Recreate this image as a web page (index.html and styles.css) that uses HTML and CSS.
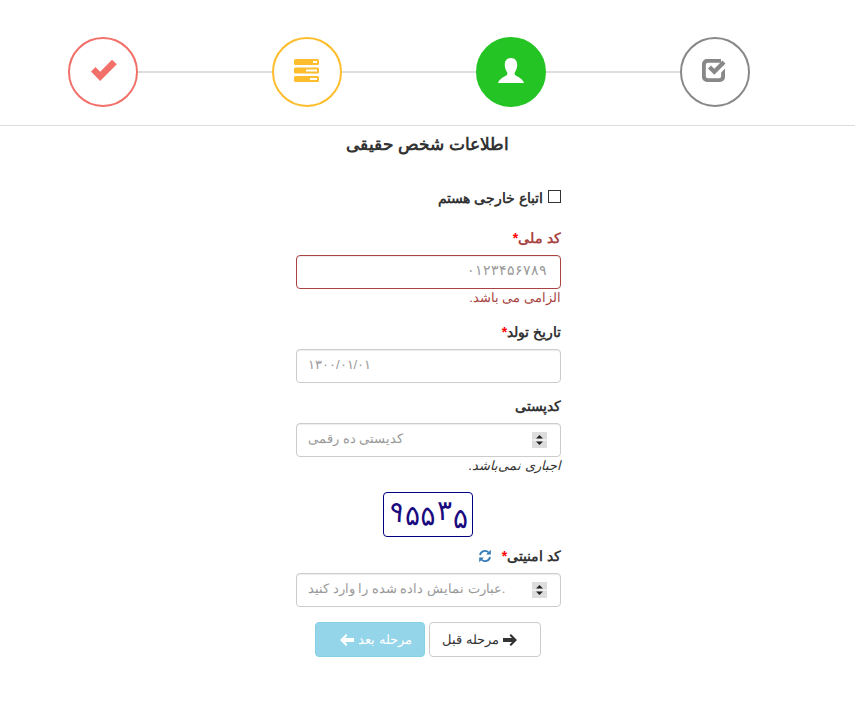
FILE: index.html
```html
<!DOCTYPE html>
<html lang="fa" dir="rtl">
<head>
<meta charset="utf-8">
<title>اطلاعات شخص حقیقی</title>
<link rel="stylesheet" href="styles.css">
</head>
<body>
<div class="stepper" dir="ltr">
  <div class="step step-red">
    <svg viewBox="0 0 26 22" width="26" height="22"><path d="M0 12.500l4.500-4.500 4.700 4.700L21 .8l4.800 4.500L9.200 22z" fill="currentColor"/></svg>
  </div>
  <div class="link"></div>
  <div class="step step-yellow">
    <svg viewBox="0 0 25 23" width="25" height="23"><g fill="currentColor"><rect y="0" width="25" height="6" rx="1.500"/><rect y="8.500" width="25" height="6" rx="1.500"/><rect y="17" width="25" height="6" rx="1.500"/></g><g fill="#fff"><rect x="19" y="2" width="4" height="2"/><rect x="12" y="10.500" width="11" height="2"/><rect x="16" y="19" width="7" height="2"/></g></svg>
  </div>
  <div class="link"></div>
  <div class="step step-green">
    <svg viewBox="0 0 26 25" width="26" height="25"><path fill="currentColor" d="M13 0c4 0 6.200 2.800 6.200 6.800 0 2.800-.8 5.400-2.200 7.200-.6.900-.6 2.500.4 3.200 2 1.300 7.200 3.300 8.600 7.800H0c1.400-4.500 6.600-6.500 8.600-7.800 1-.7 1-2.300.4-3.200-1.400-1.800-2.200-4.400-2.200-7.200C6.800 2.800 9 0 13 0z"/></svg>
  </div>
  <div class="link"></div>
  <div class="step step-grey">
    <svg viewBox="0 0 24 23" width="24" height="23"><path fill="currentColor" d="M5 0h14v3.800H6A2.200 2.200 0 0 0 3.800 6v11A2.200 2.200 0 0 0 6 19.200h11a2.200 2.200 0 0 0 2.200-2.200v-3.600l3.800-3.800V18a5 5 0 0 1-5 5H5a5 5 0 0 1-5-5V5a5 5 0 0 1 5-5z"/><path fill="currentColor" d="M6 9.500L9 6.500l3.300 3.300L20.500 1.500l3 3-11.200 11.300z"/></svg>
  </div>
</div>

<h1 class="title">اطلاعات شخص حقیقی</h1>

<form class="form">
  <div class="group group-check">
    <label class="check"><input type="checkbox" class="check-box"><span>اتباع خارجی هستم</span></label>
  </div>

  <div class="group has-error">
    <label class="label">کد ملی<span class="star">*</span></label>
    <input class="input input-digits" type="text" placeholder="۰۱۲۳۴۵۶۷۸۹">
    <div class="help">الزامی می باشد.</div>
  </div>

  <div class="group">
    <label class="label">تاریخ تولد<span class="star">*</span></label>
    <input class="input input-ltr input-date" type="text" placeholder="۱۳۰۰/۰۱/۰۱">
  </div>

  <div class="group">
    <label class="label">کدپستی</label>
    <input class="input input-ltr" type="number" placeholder="کدپستی ده رقمی">
    <div class="help help-note">اجباری نمی‌باشد.</div>
  </div>

  <div class="captcha-row">
    <div class="captcha" dir="ltr"><span class="d d1">۹</span><span class="d d2">۵</span><span class="d d3">۵</span><span class="d d4">۳</span><span class="d d5">۵</span></div>
  </div>

  <div class="group">
    <label class="label">کد امنیتی<span class="star">*</span>
      <svg class="refresh" viewBox="0 0 14 14" width="14" height="14"><g fill="none" stroke="currentColor" stroke-width="1.800"><path d="M2 6a5 5 0 0 1 8.600-2.500"/><path d="M12 8a5 5 0 0 1-8.600 2.500"/></g><g fill="currentColor"><path d="M12.800 0.800v4.700H8.100z"/><path d="M1.200 13.200V8.500h4.700z"/></g></svg>
    </label>
    <input class="input input-ltr" type="number" placeholder="عبارت نمایش داده شده را وارد کنید.">
  </div>

  <div class="actions">
    <button type="button" class="btn btn-prev">
      <svg viewBox="0 0 14 12" width="14" height="12"><path fill="currentColor" d="M8 0l6 6-6 6-1.500-1.500L9 8H0V4h9L6.500 1.500z"/></svg>
      <span class="btn-text">مرحله قبل</span>
    </button>
    <button type="button" class="btn btn-next" disabled>
      <span class="btn-text">مرحله بعد</span>
      <svg viewBox="0 0 14 12" width="14" height="12"><path fill="currentColor" d="M6 0L0 6l6 6 1.500-1.500L5 8h9V4H5l2.500-2.500z"/></svg>
    </button>
  </div>
</form>
</body>
</html>
```

FILE: styles.css
```css
* { box-sizing: border-box; }
html, body { margin: 0; padding: 0; background: #fff; }
body {
  font-family: "Liberation Sans", sans-serif;
  font-size: 14px;
  line-height: 20px;
  color: #333;
}
.stepper {
  display: flex;
  align-items: center;
  height: 126px;
  padding: 19px 105px 0 68px;
  border-bottom: 1px solid #ddd;
}
.step {
  flex: none;
  display: flex;
  align-items: center;
  justify-content: center;
  width: 70px;
  height: 70px;
  padding-bottom: 4px;
  border: 2px solid currentColor;
  border-radius: 50%;
}
.link { flex: 1; height: 2px; background: #ddd; }
.step-red { color: #f2706a; }
.step-red svg { margin-left: 2px; }
.step-yellow { color: #fdbd2c; }
.step-yellow svg { margin-right: 1px; }
.step-green { color: #fff; background: #25c425; border-color: #25c425; }
.step-green svg { margin-right: 1px; }
.step-grey { color: #888; }
.step-grey svg { margin-right: 2px; }
.title {
  margin: 8px 0 0;
  height: 30px;
  text-align: center;
  font-size: 17px;
  line-height: 22px;
  font-weight: bold;
  color: #333;
}
.form { width: 265px; margin: 26px 294px 0 296px; }
.group { margin-bottom: 15px; }
.group-check { margin-bottom: 20px; }
.check { display: flex; align-items: flex-start; gap: 5px; font-weight: bold; height: 20px; line-height: 16px; }
.check-box {
  appearance: none;
  margin: 0;
  width: 13px;
  height: 13px;
  flex: none;
  border: 1px solid #333;
  background: #fff;
}
.label { display: block; margin-bottom: 9px; font-weight: bold; line-height: 16px; }
.star { color: #f00; }
.refresh { color: #337ab7; margin-right: 6px; vertical-align: -2px; }
.input {
  display: block;
  width: 100%;
  height: 34px;
  padding: 4px 12px 8px;
  border: 1px solid #ccc;
  border-radius: 4px;
  font: inherit;
  font-size: 13px;
  color: #555;
  background: #fff;
  box-shadow: inset 0 1px 1px rgba(0,0,0,.075);
}
.input-digits { font-size: 14px; padding-right: 13px; }
.input-date { letter-spacing: -.6px; }
.input::placeholder { color: #999; opacity: 1; }
.input-ltr { direction: ltr; text-align: left; padding-left: 11px; }
.input::-webkit-inner-spin-button {
  -webkit-appearance: none;
  appearance: none;
  opacity: 1;
  width: 15px;
  height: 16px;
  margin: 0 1px 0 4px;
  transform: translateY(2px);
  background:
    url("data:image/svg+xml,%3Csvg xmlns='http://www.w3.org/2000/svg' width='15' height='16'%3E%3Crect width='15' height='16' fill='%23ddd'/%3E%3Crect y='7.500' width='15' height='1' fill='%23fff'/%3E%3Cpath d='M7.500 3l3.500 3.500H4zM7.500 13L4 9.500h7z' fill='%23222'/%3E%3C/svg%3E") no-repeat;
}
.help { color: #333; font-size: 13px; line-height: 18px; padding-bottom: 2px; }
.help-note { font-style: italic; }
.has-error .label, .has-error .help { color: #a94442; }
.has-error .star { color: #f00; }
.has-error .input { border-color: #a94442; }
.captcha-row { display: flex; justify-content: center; margin-bottom: 11px; padding-right: 1px; }
.captcha {
  display: flex;
  justify-content: center;
  width: 90px;
  height: 45px;
  border: 1px solid #000080;
  border-radius: 4px;
  font-size: 28px;
  line-height: 42px;
  color: #1a0a80;
  overflow: hidden;
}
.d { display: block; width: 16px; text-align: center; }
.d1 { transform: rotate(14deg) translateY(-2px); }
.d2 { transform: translateY(2px); }
.d3 { transform: translateY(2px) rotate(-5deg); }
.d4 { transform: translateY(-3px); }
.d5 { transform: translateY(5px); }
.actions { display: flex; justify-content: center; gap: 4px; padding-right: 1px; }
.btn {
  display: flex;
  align-items: center;
  gap: 4px;
  height: 35px;
  border: 1px solid #ccc;
  border-radius: 4px;
  background: #fff;
  font: inherit;
  font-size: 13px;
  color: #333;
}
.btn svg { flex: none; }
.btn-text { white-space: nowrap; }
.btn-prev { width: 112px; padding: 0 23px 0 12px; }
.btn-next { width: 110px; padding: 0 12px; color: #fff; background: #5bc0de; border-color: #46b8da; opacity: .65; }
```
